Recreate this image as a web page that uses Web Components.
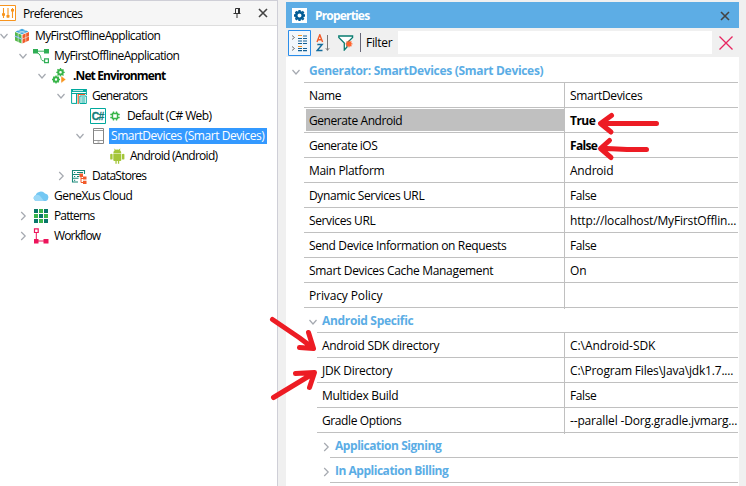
<!DOCTYPE html>
<html lang="en"><head><meta charset="utf-8"><title>Properties</title>
<style>
html,body{margin:0;width:746px;height:486px;overflow:hidden;background:#f0f0f0}
body{font:12px "Open Sans","Noto Sans",sans-serif;color:#000}
</style></head><body>
<app-window></app-window>
<script>
const define=(n,c)=>customElements.define(n,c);
const ICONS={
open:[8,16,'<path d="M.5 6l3.5 4 3.5-4" fill="none" stroke="#a5a9b0" stroke-width="1.2"/>'],
closed:[8,16,'<path d="M2.2 4l4 4-4 4" fill="none" stroke="#a5a9b0" stroke-width="1.2"/>'],
sliders:[16,16,'<path d="M0 .5h15.5v15H0" fill="#fff" stroke="#f7941e"/><path d="M3.500 3v10M8 3v10M12.500 3v10" stroke="#f7941e" stroke-width="1.1"/><path d="M2 8.2h3v2.6H2zM6.500 10h3v2.400h-3zM11 4h3v2.600h-3z" fill="#f7941e"/>'],
pin:[8,10,'<path d="M2.500 .5h4v5h-4zM.5 5.500h7M4 6v4" fill="none" stroke="#333"/><path d="M5 0h2v5.500H5z" fill="#333"/>'],
close:[10,10,'<path d="M1 1l8 8M9 1l-8 8" stroke="#444" stroke-width="1.600"/>'],
cube:[16,16,'<path d="M8 .8l6.500 2.700L8 6.200 1.500 3.500z" fill="#43a7df"/><path d="M1 4l6.500 2.700V15.500L1 12.500z" fill="#55b84a"/><path d="M15 4L8.500 6.700V15.500l6.500-3z" fill="#f15a29"/><path d="M1 8l6.500 3" stroke="#3a8fc9" stroke-width="1.400"/><path d="M1 8.200l7 3 7-3M4.200 5.200v8.800M11.800 5.200v8.800M4 2.400l7.500 2.800M12 2.400L4.300 5.200" stroke="#e9f4ef" stroke-width=".6" fill="none"/>'],
model:[16,16,'<path d="M0 1h5v4.500H0zM11 1h5v4.500h-5z" fill="#2fae55"/><path d="M5 3.200h6M4.500 5c2.500 1 3 3 3.500 5.500.3 1.600 1.200 2.500 3.500 2.500" fill="none" stroke="#39b45c"/><path d="M11.600 10.800h3.800v3.800h-3.800z" fill="#fff" stroke="#2fae55" stroke-width="1.200"/>'],
env:[16,16,'<g stroke="#39b54a" fill="none"><circle cx="8.500" cy="4.300" r="2.300" stroke-width="2"/><path d="M8.500 0v2m0 4.500v2M4.300 4.300h2m4.400 0h2M5.500 1.300L7 3m3 3l1.500 1.500m0-6L10 3M7 6L5.500 7.500" stroke-width="1.300"/><circle cx="4" cy="11.500" r="2.200" stroke-width="2"/><path d="M4 7.600v2m0 4v2M0 11.500h2m4 0h2M1.300 8.800l1.500 1.500m2.500 2.500l1.500 1.500M1.300 14.200l1.500-1.500m2.400-2.500l1.500-1.500" stroke-width="1.300"/></g><path d="M9 7.800l5 3.700-5 3.700z" fill="#f7941e" stroke="#fff" stroke-width=".5"/>'],
gens:[16,16,'<path d="M.6 1h14.800v3H.6z" fill="#00a99d"/><path d="M2 2.600h10" stroke="#fff" stroke-width=".8"/><path d="M.6 1v14.400H6M5.500 5v10M0 5.500h15.400M15.400 1v6" fill="none" stroke="#00a99d"/><path d="M7.200 16V6.500H14" fill="none" stroke="#f15a29" stroke-width="1.200"/><path d="M8.900 8h6.400v7.500H8.900z" fill="#fff" stroke="#00a99d"/><path d="M10.300 10h3.700m-3.700 2h3.700m-3.700 2h3.700" stroke="#00a99d"/>'],
csharp:[16,16,'<path d="M.5.5h15v15H.5z" fill="#fff" stroke="#00a99d"/><text x="8" y="11.800" text-anchor="middle" textLength="12.500" font-family="Liberation Sans" font-weight="700" font-size="10.500" stroke="#157d79" stroke-width=".3" fill="#157d79">C#</text>'],
chip:[10,16,'<path d="M2.500 5.500h5v5h-5zM3.500 3.500v2m3-2v2m-3 5v2m3-2v2M.3 6.500H2m-1.700 3H2m6-3h1.700M8 9.500h1.700" fill="none" stroke="#39b54a" stroke-width="1.400"/>'],
phone:[16,16,'<path d="M3.500.5h10v15h-10z" fill="#fff" stroke="#858585"/><path d="M4 2.500h9M4 12.500h9M7.500 14h2" stroke="#999"/>'],
droid:[16,16,'<path d="M4.300 5.500a4 4 0 0 1 8 0zM4.300 6.100h8V12q0 1-1 1H10.200v2.800H8.900V13H7.700v2.800H6.400V13h-1.100q-1 0-1-1zM1.200 6.200q1.300-.8 2.400 0v5q-1.300.8-2.400 0zM13 6.200q1.300-.8 2.400 0v5q-1.300.8-2.400 0z" fill="#a4c639"/><path d="M5.500.8l1 1.800M11 .8l-1 1.800" stroke="#a4c639"/>'],
data:[16,16,'<path d="M7 14H1.500V2.500h12V6M1.500 6.500h8M1.500 10.300h6" fill="none" stroke="#178878" stroke-width="1.100"/><path d="M3 4.500h1.200M3 8.500h1.200M3 12.300h1.200M6 4.500h6M6 8.500h2" stroke="#178878"/><path d="M8.500 5.500h3.500v3.500H8.500zM12 8.500h3.500v3H12zM12 12.700h3.500V16H12z" fill="#f15a29"/><path d="M10 9v5.500h3M10 10.500h2" stroke="#f15a29" fill="none"/>'],
cloud:[16,16,'<path d="M3 13a3 3 0 0 1-.3-5.800A5.500 5.500 0 0 1 12 5.400 4 4 0 0 1 13 13z" fill="#72c7f3"/><path d="M3 13a3 3 0 0 1-.3-5.800 4 4 0 0 1 5 1.500L11 13z" fill="#9ad8f7"/>'],
patterns:[16,16,'<path d="M1 1h4v4H1zM11 1h4v4h-4zM6 6h4v4H6zM1 11h4v4H1zM11 11h4v4h-4z" fill="#08766a"/><path d="M6 1h4v4H6zM1 6h4v4H1zM11 6h4v4h-4zM6 11h4v4H6z" fill="#39b54a"/>'],
flow:[16,16,'<path d="M1.500 .8h3.700v3.700H1.500z" fill="#fff" stroke="#ed145b" stroke-width="1.200"/><path d="M3.300 4.500v8.500H12" fill="none" stroke="#ed145b"/><path d="M1 11h4.500v4.500H1zM10.500 11H15.500v4.500h-5z" fill="#ed145b"/>'],
gear:[15,15,'<path d="M0 0h15v15H0z" fill="#fff"/><circle cx="7.500" cy="7.500" r="3.300" fill="none" stroke="#005b94" stroke-width="2.600"/><path d="M7.500 2v1.500m0 8V13M2 7.500h1.500m8 0H13M3.600 3.600l1 1m6 6l1 1m0-8l-1 1m-6 6l-1 1" stroke="#005b94" stroke-width="2.300"/>'],
cat:[23,26,'<path d="M.5.5h22v25H.5z" fill="#f2f7fc" stroke="#2a8dea"/><path d="M4 5.500l2.500 2L4 9.500m0 7l2.500 2-2.500 2" fill="none" stroke="#666" stroke-width=".9"/><path d="M10 5.500h4M10 16.500h4" stroke="#f7941e" stroke-width="1.200"/><path d="M10 8.500h4M10 11h4M10 13.500h4M10 18.500h4M10 20.700h4M15 8.500h4M15 11h4M15 13.500h4M15 18.500h4M15 20.700h4M15 6h4" stroke="#146094" stroke-width="1.200"/>'],
sort:[14,18,'<path d="M1 8L3.800.8 6.600 8M2 5.700h3.700" fill="none" stroke="#f15a29" stroke-width="1.400"/><path d="M1.300 10.500h4.900l-5 6h5.300" fill="none" stroke="#146c9c" stroke-width="1.400"/><path d="M11.500 1v15.500M9.800 14.200l1.700 2 1.700-2" fill="none" stroke="#777"/>'],
funnel:[16,16,'<path d="M.8 1h13.800v1.500L9 8v4l-2.700 3V8L.8 2.500z" fill="#fff" stroke="#087c70" stroke-width="1.300"/><path d="M11 5.500v6.800M7.600 8.900h6.800M8.600 6.500l4.800 4.800m0-4.800l-4.800 4.800" stroke="#ff622b" stroke-width="1.300"/><circle cx="11" cy="8.900" r="2" fill="#ff622b"/>'],
clear:[14,14,'<path d="M.5.5l13 13M13.500.5l-13 13" stroke="#e8255f" stroke-width="1.300"/>']
};
class UiIcon extends HTMLElement{connectedCallback(){const [w,h,b]=ICONS[this.getAttribute('name')];
this.attachShadow({mode:'open'}).innerHTML=`<style>:host{display:block;flex:none;width:${w}px;height:${h}px}svg{display:block}</style><svg width="${w}" height="${h}" viewBox="0 0 ${w} ${h}">${b}</svg>`}}
/* A label whose letter spacing is tuned so that it fills the given width. */
class FitText extends HTMLElement{connectedCallback(){
this.attachShadow({mode:'open'}).innerHTML='<style>:host{display:block;flex:none;white-space:nowrap}span{display:inline-block;white-space:pre}</style><span><slot></slot></span>';
const s=this.shadowRoot.querySelector('span'),w=+this.getAttribute('w');
requestAnimationFrame(()=>this.fit(s,w));this.fit(s,w)}
fit(s,w){s.style.letterSpacing='0';const n=this.textContent.length,r=s.getBoundingClientRect().width;if(r&&w&&n>1)s.style.letterSpacing=((w+.3-r)/n)+'px'}}
class TreeRow extends HTMLElement{connectedCallback(){const a=n=>this.getAttribute(n),d=+a('depth');
this.attachShadow({mode:'open'}).innerHTML=`<style>:host{display:flex;height:20px;align-items:center;padding-left:${19*d}px;line-height:16px}
.c{width:8px;margin-right:6px;flex:none}.i{display:flex;gap:4px;min-width:16px}.t{margin-left:${a('gap')||5}px}
:host([selected]) .t{background:#3399ff;color:#fff;padding:0 3px 0 2px;margin-left:3px;height:16px}:host([bold]) .t{font-weight:700}</style>
<div class="c">${a('state')?`<ui-icon name="${a('state')}"></ui-icon>`:''}</div><div class="i">${a('icons').split(' ').map(n=>`<ui-icon name="${n}"></ui-icon>`).join('')}</div><div class="t"><fit-text w="${a('w')}">${a('label')}</fit-text></div>`}}
class PropRow extends HTMLElement{connectedCallback(){const a=n=>this.getAttribute(n),g=this.hasAttribute('group'),d=+a('depth');
this.attachShadow({mode:'open'}).innerHTML=`<style>:host{display:flex;height:25px;line-height:26px;box-sizing:border-box}
.pad{flex:none;box-sizing:border-box;width:${18+13*d}px;display:flex;align-items:center;justify-content:flex-end;padding-right:${d?0:4}px;padding-top:2px}
.cells{flex:1;display:flex;border-bottom:1px solid #c0c0c0;box-sizing:border-box;margin-right:1px}
.n{width:${g?'auto':261-13*d+'px'};flex:none;box-sizing:border-box;padding-left:5px;${g?'color:#5badE5;font-weight:700;':'border-right:1px solid #c0c0c0;'}position:relative}
:host([selected]) .n{background:linear-gradient(#c0c0c0,#c0c0c0) 2px 1px/258px 22px no-repeat}
:host([last]) .n:after{content:"";position:absolute;right:-1px;top:24px;width:1px;height:2px;background:#c0c0c0}
.v{padding-left:5px}:host([bold]) .v{font-weight:700}</style>
<div class="pad">${g?`<ui-icon name="${a('state')}"></ui-icon>`:''}</div><div class="cells"><div class="n"><fit-text w="${a('w')}">${a('label')}</fit-text></div>${g?'':`<div class="v"><fit-text w="${a('vw')||0}">${a('value')||''}</fit-text></div>`}</div>`}}
class PrefPane extends HTMLElement{connectedCallback(){
const r=[[0,'open','cube','MyFirstOfflineApplication',125],[1,'open','model','MyFirstOfflineApplication',125],[2,'open','env','.Net Environment',92,'bold'],[3,'open','gens','Generators',55],[4,'','csharp chip','Default (C# Web)',84,'gap="7"'],[4,'open','phone','SmartDevices (Smart Devices)',153,'selected'],[5,'','droid','Android (Android)',87],[3,'closed','data','DataStores',54],[1,'','cloud','GeneXus Cloud',78],[1,'closed','patterns','Patterns',40],[1,'closed','flow','Workflow',46]];
this.attachShadow({mode:'open'}).innerHTML=`<style>:host{display:block;width:278px;height:486px;background:#fff;border:solid #cfcfd7;border-width:1px 1px 0 0;box-sizing:border-box}
header{display:flex;align-items:center;height:25px;background:#f6f6f6;border-bottom:1px solid #dedede;box-sizing:border-box;padding-right:9px}
fit-text{margin-left:7px;flex:1}.p{margin-right:17px}</style>
<header><ui-icon name="sliders"></ui-icon><fit-text w="59">Preferences</fit-text><ui-icon class="p" name="pin"></ui-icon><ui-icon name="close"></ui-icon></header>
${r.map(x=>`<tree-row depth="${x[0]}" state="${x[1]}" icons="${x[2]}" label="${x[3]}" w="${x[4]}" ${x[5]||''}></tree-row>`).join('')}`}}
class PropPane extends HTMLElement{connectedCallback(){
const G=(d,s,l,w)=>`<prop-row group depth="${d}" state="${s}" label="${l}" w="${w}"></prop-row>`,P=(d,l,w,v,vw,x='')=>`<prop-row depth="${d}" label="${l}" w="${w}" value="${v}" vw="${vw}" ${x}></prop-row>`;
this.attachShadow({mode:'open'}).innerHTML=`<style>:host{display:block;width:453px;padding-top:2px}
header{display:flex;align-items:center;height:26px;background:#5dade5;color:#fff;font-weight:700;padding:0 9px 0 6px}header fit-text{flex:1;margin-left:8px}header ui-icon:last-child{margin-top:2px}
.bar{display:flex;height:29px;align-items:center;padding:0 6px 0 2px;box-sizing:border-box}.bar .s{margin:0 8px 0 5px}.bar .sep{width:1px;height:19px;background:#667;margin:0 5px 0 6px}
.in{flex:1;height:23px;background:#fff;margin:0 7px 0 6px}.list{background:#fff;height:429px;padding-top:1px;box-sizing:border-box}</style>
<header><ui-icon name="gear"></ui-icon><fit-text w="54">Properties</fit-text><ui-icon name="close"></ui-icon></header>
<div class="bar"><ui-icon name="cat"></ui-icon><ui-icon class="s" name="sort"></ui-icon><ui-icon name="funnel"></ui-icon><div class="sep"></div><fit-text w="26">Filter</fit-text><div class="in"></div><ui-icon name="clear"></ui-icon></div>
<div class="list">${G(0,'open','Generator: SmartDevices (Smart Devices)',234)+P(0,'Name',32,'SmartDevices',72)+P(0,'Generate Android',93,'True',25,'selected bold')+P(0,'Generate iOS',68,'False',27,'bold')+P(0,'Main Platform',75,'Android',43)+P(0,'Dynamic Services URL',115,'False',26)+P(0,'Services URL',66,'http://localhost/MyFirstOfflin...',166)+P(0,'Send Device Information on Requests',197,'False',26)+P(0,'Smart Devices Cache Management',184,'On',16)+P(0,'Privacy Policy',73,'',0,'last')+G(1,'open','Android Specific',91)+P(1,'Android SDK directory',117,'C:\\Android-SDK',85)+P(1,'JDK Directory',70,'C:\\Program Files\\Java\\jdk1.7....',163)+P(1,'Multidex Build',76,'False',26)+P(1,'Gradle Options',79,'--parallel -Dorg.gradle.jvmarg...',167,'last')+G(2,'closed','Application Signing',106)+G(2,'closed','In Application Billing',113)}</div>`}}
class HintArrows extends HTMLElement{connectedCallback(){this.attachShadow({mode:'open'}).innerHTML=`<style>:host{position:absolute;inset:0;pointer-events:none}svg{display:block}</style>
<svg width="746" height="486" fill="none" stroke="#ed1c24" stroke-width="5" stroke-linecap="round" stroke-linejoin="round"><path d="M656.500 123.500H601M611.500 115.500L600.500 123.500 611 132"/><path d="M646.500 149.500H627L602 148.300M609.500 140.500L600.500 148.500 611 157.500"/><path d="M272.500 319.500L299 337.500 313 348M308.500 332.500L313.500 348.500 299.500 347.500"/><path d="M273.500 397.500L314 373M295.500 373.500L314.500 372.500 309.500 387.500"/></svg>`}}
class AppWindow extends HTMLElement{connectedCallback(){this.attachShadow({mode:'open'}).innerHTML=`<style>:host{display:flex;gap:8px;position:relative;width:746px;height:486px;overflow:hidden;background:#f0f0f0}</style><pref-pane></pref-pane><prop-pane></prop-pane><hint-arrows></hint-arrows>`}}
define('ui-icon',UiIcon);define('fit-text',FitText);define('tree-row',TreeRow);define('prop-row',PropRow);define('pref-pane',PrefPane);define('prop-pane',PropPane);define('hint-arrows',HintArrows);define('app-window',AppWindow);
</script></body></html>
